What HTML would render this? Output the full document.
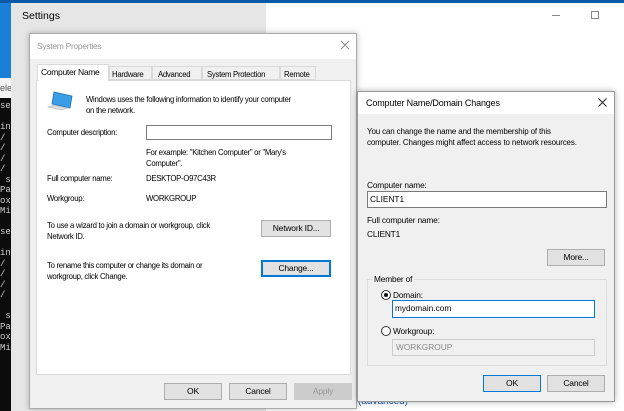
<!DOCTYPE html>
<html><head><style>
*{box-sizing:border-box;margin:0;padding:0}
body{width:624px;height:411px;overflow:hidden;position:relative;background:#fff;font-family:"Liberation Sans",sans-serif;font-size:9px;color:#000}
.a{position:absolute}
.btn{position:absolute;background:#e1e1e1;border:1px solid #adadad;text-align:center;font-size:8.5px;line-height:15px;letter-spacing:-0.2px}
.t{position:absolute;font-size:7.8px;letter-spacing:-0.3px;line-height:11px;white-space:nowrap}
.d .t{font-size:8.3px;letter-spacing:-0.15px}
.in{position:absolute;background:#fff;border:1px solid #7a7a7a}
</style></head><body>
<div class="a" style="left:0;top:0;width:624px;height:3px;background:#0a5aa8"></div>
<div class="a" style="left:0;top:3px;width:11px;height:75px;background:#1a7fd6"></div>
<div class="a" style="left:0;top:78px;width:11px;height:20px;background:#f4f4f4;color:#555;font-size:9px;line-height:20px">ele</div>
<div class="a" style="left:0;top:98px;width:11px;height:313px;background:#0c0c0c;color:#ccc;font-family:'Liberation Mono',monospace;font-size:9px;line-height:10.5px;overflow:hidden;padding-top:3px">se<br><br>in<br>/<br>/<br>/<br>/<br>&nbsp;s<br>Pa<br>ox<br>Mi<br><br>se<br><br>in<br>/<br>/<br>/<br>/<br><br>&nbsp;s<br>Pa<br>ox<br>Mi</div>
<div class="a" style="left:11px;top:3px;width:255px;height:408px;background:#e6e6e6"></div>
<div class="a" style="left:22px;top:10px;font-size:10.5px;line-height:12px">Settings</div>
<div class="a" style="left:552px;top:15px;width:8px;height:1px;background:#888"></div>
<div class="a" style="left:591px;top:11px;width:8px;height:8px;border:1px solid #888"></div>
<div class="a" style="left:358px;top:396px;color:#1a5fb4;font-size:10px">(advanced)</div>
<!-- system properties -->
<div class="a" style="left:29px;top:33px;width:328px;height:376px;background:#f0f0f0;border:1px solid #aaa;box-shadow:0 0 6px rgba(0,0,0,.25)"></div>
<div class="a" style="left:30px;top:34px;width:326px;height:25px;background:#fff"></div>
<div class="t" style="left:37px;top:41px;color:#999;font-size:8.5px">System Properties</div>
<svg class="a" style="left:340px;top:40px" width="10" height="10"><path d="M1 1L9 9M9 1L1 9" stroke="#888" stroke-width="1"/></svg>
<div class="a" style="left:36px;top:80px;width:315px;height:295px;background:#fff;border:1px solid #d9d9d9"></div>
<div class="a" style="left:37px;top:64px;width:72px;height:17px;background:#fff;border:1px solid #d9d9d9;border-bottom:none"></div>
<div class="t" style="left:41px;top:67px;font-size:8.5px">Computer Name</div>
<div class="a" style="left:109px;top:66px;width:43px;height:14px;background:#f0f0f0;border:1px solid #d9d9d9"></div><div class="t" style="left:112px;top:69px">Hardware</div>
<div class="a" style="left:152px;top:66px;width:50px;height:14px;background:#f0f0f0;border:1px solid #d9d9d9"></div><div class="t" style="left:158px;top:69px">Advanced</div>
<div class="a" style="left:202px;top:66px;width:78px;height:14px;background:#f0f0f0;border:1px solid #d9d9d9"></div><div class="t" style="left:207px;top:69px">System Protection</div>
<div class="a" style="left:280px;top:66px;width:36px;height:14px;background:#f0f0f0;border:1px solid #d9d9d9"></div><div class="t" style="left:284px;top:69px">Remote</div>
<svg class="a" style="left:46px;top:90px" width="28" height="24"><polygon points="8,2 26,6 24,18 6,14" fill="#3a9ee6" stroke="#1a6fb0" stroke-width=".8"/><polygon points="2,17 16,20 22,18 8,15" fill="#d8dde3" stroke="#aaa" stroke-width=".6"/></svg>
<div class="t" style="left:86px;top:94px">Windows uses the following information to identify your computer<br>on the network.</div>
<div class="t" style="left:47px;top:127px">Computer description:</div>
<div class="in" style="left:146px;top:125px;width:186px;height:15px"></div>
<div class="t" style="left:146px;top:147px">For example: "Kitchen Computer" or "Mary's<br>Computer".</div>
<div class="t" style="left:47px;top:173px">Full computer name:</div>
<div class="t" style="left:146px;top:173px">DESKTOP-O97C43R</div>
<div class="t" style="left:47px;top:193px">Workgroup:</div>
<div class="t" style="left:146px;top:193px">WORKGROUP</div>
<div class="t" style="left:47px;top:220px">To use a wizard to join a domain or workgroup, click<br>Network ID.</div>
<div class="btn" style="left:261px;top:220px;width:70px;height:17px">Network ID...</div>
<div class="t" style="left:47px;top:260px">To rename this computer or change its domain or<br>workgroup, click Change.</div>
<div class="btn" style="left:261px;top:260px;width:70px;height:17px;border:2px solid #0078d7;line-height:13px">Change...</div>
<div class="btn" style="left:164px;top:383px;width:58px;height:17px">OK</div>
<div class="btn" style="left:229px;top:383px;width:58px;height:17px">Cancel</div>
<div class="btn" style="left:294px;top:383px;width:58px;height:17px;color:#999;border-color:#ccc;background:#ccc">Apply</div>
<!-- second dialog -->
<div class="d">
<div class="a" style="left:357px;top:91px;width:258px;height:311px;background:#f0f0f0;border:1px solid #999;box-shadow:0 0 6px rgba(0,0,0,.3)"></div>
<div class="a" style="left:358px;top:92px;width:256px;height:22px;background:#fff"></div>
<div class="t" style="left:366px;top:98px;font-size:9px">Computer Name/Domain Changes</div>
<svg class="a" style="left:598px;top:98px" width="9" height="9"><path d="M0.5 0.5L8.5 8.5M8.5 0.5L0.5 8.5" stroke="#222" stroke-width="1"/></svg>
<div class="t" style="left:367px;top:126px;font-size:8px">You can change the name and the membership of this<br>computer. Changes might affect access to network resources.</div>
<div class="t" style="left:367px;top:180px">Computer name:</div>
<div class="in" style="left:367px;top:191px;width:240px;height:17px;line-height:14px;padding-left:2px;font-size:8.3px">CLIENT1</div>
<div class="t" style="left:367px;top:215px">Full computer name:</div>
<div class="t" style="left:367px;top:229px">CLIENT1</div>
<div class="btn" style="left:547px;top:249px;width:58px;height:17px">More...</div>
<div class="a" style="left:367px;top:279px;width:240px;height:87px;border:1px solid #dcdcdc"></div>
<div class="t" style="left:372px;top:274px;background:#f0f0f0;padding:0 2px">Member of</div>
<div class="a" style="left:381px;top:290px;width:10px;height:10px;border:1px solid #333;border-radius:50%;background:#fff"></div>
<div class="a" style="left:384px;top:293px;width:4px;height:4px;border-radius:50%;background:#111"></div>
<div class="t" style="left:393px;top:290px">Domain:</div>
<div class="in" style="left:392px;top:300px;width:203px;height:18px;border-color:#0078d7;line-height:15px;padding-left:2px;font-size:8.3px">mydomain.com</div>
<div class="a" style="left:381px;top:326px;width:10px;height:10px;border:1px solid #333;border-radius:50%;background:#fff"></div>
<div class="t" style="left:393px;top:326px">Workgroup:</div>
<div class="a" style="left:392px;top:339px;width:203px;height:17px;border:1px solid #ccc;background:#f0f0f0;color:#888;line-height:15px;padding-left:3px;font-size:8.3px">WORKGROUP</div>
<div class="btn" style="left:483px;top:375px;width:58px;height:17px;border-color:#0078d7">OK</div>
<div class="btn" style="left:547px;top:375px;width:58px;height:17px">Cancel</div>
</div>
</body></html>
